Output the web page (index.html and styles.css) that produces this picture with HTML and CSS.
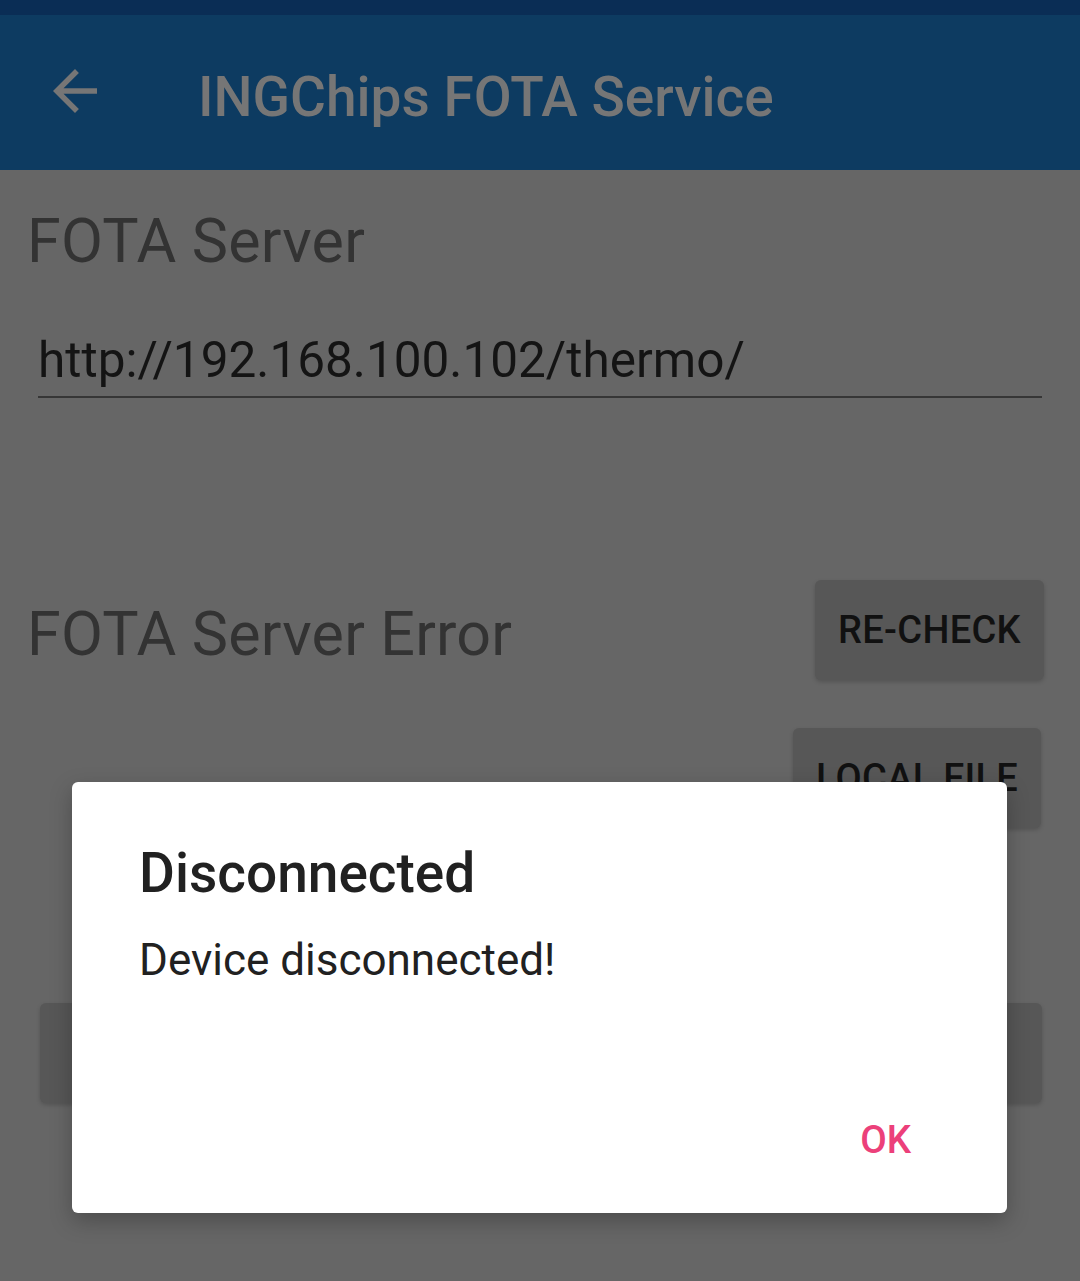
FILE: index.html
```html
<!DOCTYPE html>
<html lang="en">
<head>
<meta charset="utf-8">
<title>INGChips FOTA Service</title>
<link rel="stylesheet" href="styles.css">
</head>
<body>
<div class="screen">
  <div class="statusbar"></div>
  <header class="appbar">
    <button class="back" aria-label="Back">
      <svg viewBox="0 0 24 24" width="66" height="66"><path d="M20 11H7.83l5.59-5.59L12 4l-8 8 8 8 1.41-1.41L7.83 13H20v-2z" fill="currentColor"/></svg>
    </button>
    <h1 class="app-title">INGChips FOTA Service</h1>
  </header>
  <main class="content">
    <h2 class="section-title">FOTA Server</h2>
    <div class="url-field">http://192.168.100.102/thermo/</div>
    <div class="error-row">
      <h2 class="section-title">FOTA Server Error</h2>
      <button class="btn btn-recheck">RE-CHECK</button>
    </div>
    <div class="local-row">
      <button class="btn btn-local">LOCAL FILE</button>
    </div>
    <button class="btn btn-wide"></button>
  </main>

  <div class="dialog" role="dialog">
    <h3 class="dialog-title">Disconnected</h3>
    <p class="dialog-body">Device disconnected!</p>
    <div class="dialog-actions">
      <button class="dialog-ok">OK</button>
    </div>
  </div>
</div>
</body>
</html>
```

FILE: styles.css
```css
* { box-sizing: border-box; }

html, body {
  margin: 0;
  padding: 0;
}

body {
  width: 1080px;
  height: 1281px;
  overflow: hidden;
  background: #666666;
  font-family: Roboto, "Noto Sans", "Liberation Sans", sans-serif;
}

.screen {
  position: relative;
  width: 1080px;
  height: 1281px;
  background: #666666;
}

.statusbar {
  height: 15px;
  background: #0a2d55;
}

.appbar {
  height: 155px;
  background: #0d3b61;
  display: flex;
  align-items: center;
  padding-left: 42px;
}

.back {
  border: 0;
  background: none;
  padding: 0;
  width: 66px;
  height: 66px;
  color: #767676;
  display: flex;
  margin-top: -4px;
}

.app-title {
  margin: 8px 0 0 90px;
  font-size: 55px;
  font-weight: 500;
  color: #767676;
  line-height: 64px;
  letter-spacing: 0;
}

.content {
  padding: 36px 36px 0 27px;
  display: flex;
  flex-direction: column;
}

.section-title {
  margin: 0;
  font-size: 61px;
  font-weight: 400;
  line-height: 71px;
  color: #333333;
  letter-spacing: 0.2px;
}

.url-field {
  margin: 54px 2px 0 11px;
  font-size: 49.5px;
  line-height: 58px;
  color: #141414;
  padding-bottom: 7px;
  border-bottom: 2.5px solid #363636;
}

.error-row {
  margin-top: 182px;
  display: flex;
  align-items: center;
  justify-content: space-between;
  height: 100px;
}

.error-row .section-title {
  margin-top: 8px;
}

.btn {
  border: 0;
  border-radius: 6px;
  background: #575757;
  box-shadow: 0 2px 4px rgba(0, 0, 0, 0.18);
  font-family: Roboto, "Noto Sans", "Liberation Sans", sans-serif;
  font-size: 38px;
  font-weight: 500;
  color: #111111;
  letter-spacing: 0.3px;
  padding: 0;
}

.btn-recheck {
  width: 229px;
  height: 100px;
  margin-right: 0;
}

.local-row {
  margin-top: 48px;
  display: flex;
  justify-content: flex-end;
}

.btn-local {
  width: 248px;
  height: 100px;
  margin-right: 3px;
}

.btn-wide {
  margin-top: 175px;
  margin-left: 13px;
  margin-right: 2px;
  height: 100px;
}

.dialog {
  position: absolute;
  left: 72px;
  top: 782px;
  width: 935px;
  height: 431px;
  background: #ffffff;
  border-radius: 6px;
  box-shadow: 0 8px 22px rgba(0, 0, 0, 0.25);
  padding: 59px 0 0 67px;
  display: flex;
  flex-direction: column;
}

.dialog-title {
  margin: 0;
  font-size: 55px;
  font-weight: 500;
  line-height: 64.5px;
  color: #212121;
}

.dialog-body {
  margin: 29px 0 0 0;
  font-size: 44px;
  line-height: 51.5px;
  color: #212121;
}

.dialog-actions {
  margin-top: 131px;
  display: flex;
  justify-content: flex-end;
  padding-right: 74px;
}

.dialog-ok {
  border: 0;
  background: none;
  padding: 0 22px;
  font-family: Roboto, "Noto Sans", "Liberation Sans", sans-serif;
  font-size: 38.5px;
  font-weight: 500;
  line-height: 45px;
  color: #ec407a;
}
```
